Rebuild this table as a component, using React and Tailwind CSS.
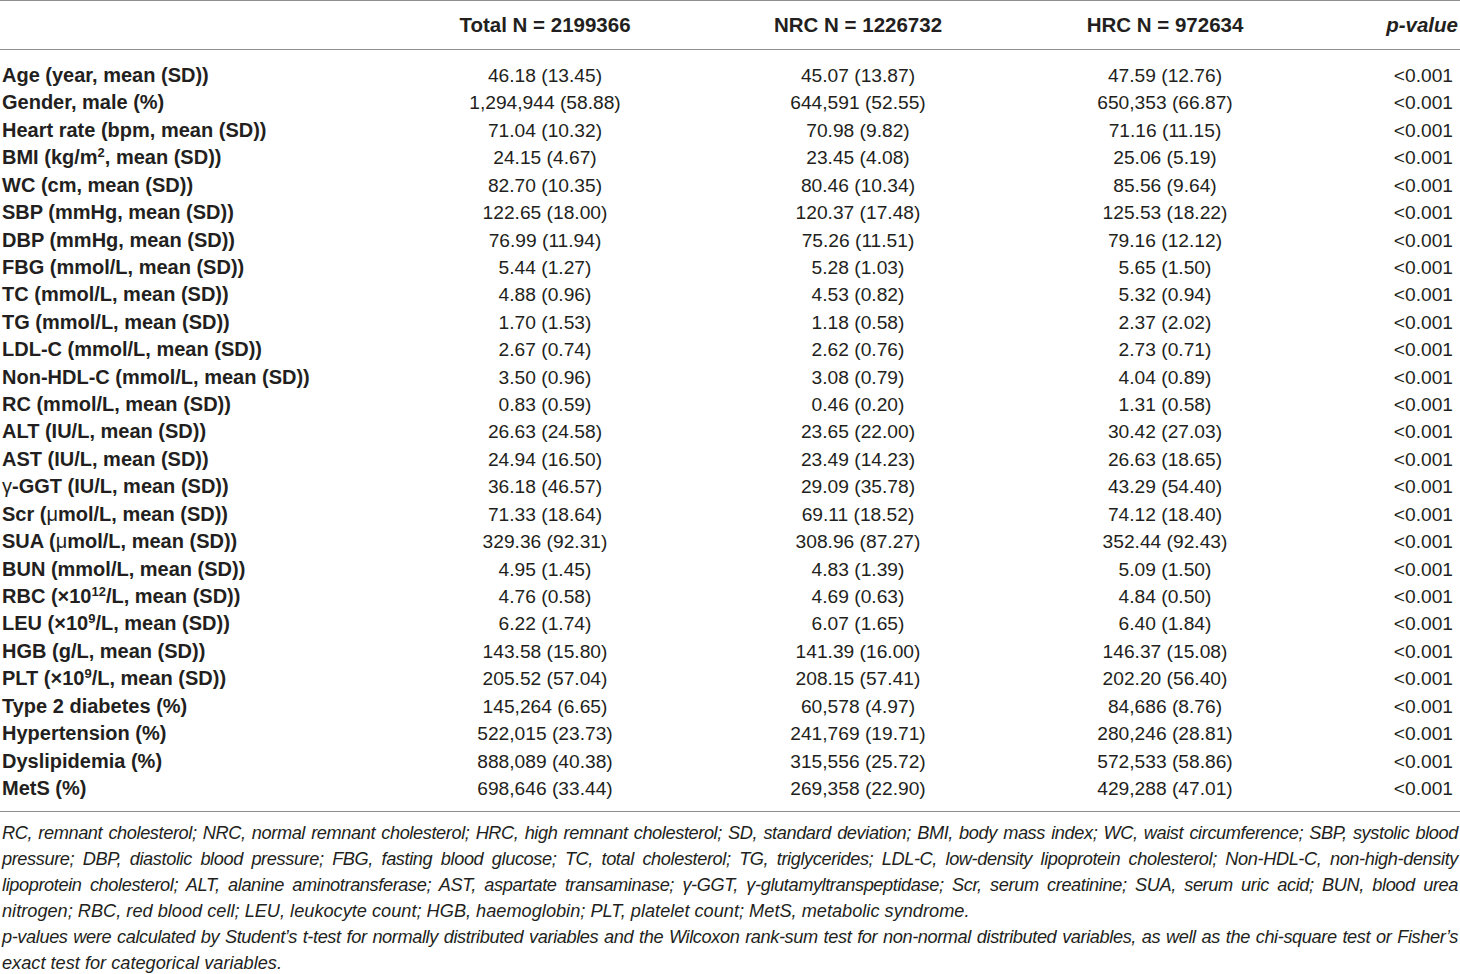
// App.jsx
const Sup = ({ children }) => <sup className="text-[13px] -top-[0.55em]">{children}</sup>

const rows = [
    [<>Age (year, mean (SD))</>, '46.18 (13.45)', '45.07 (13.87)', '47.59 (12.76)'],
    [<>Gender, male (%)</>, '1,294,944 (58.88)', '644,591 (52.55)', '650,353 (66.87)'],
    [<>Heart rate (bpm, mean (SD))</>, '71.04 (10.32)', '70.98 (9.82)', '71.16 (11.15)'],
    [<>BMI (kg/m<Sup>2</Sup>, mean (SD))</>, '24.15 (4.67)', '23.45 (4.08)', '25.06 (5.19)'],
    [<>WC (cm, mean (SD))</>, '82.70 (10.35)', '80.46 (10.34)', '85.56 (9.64)'],
    [<>SBP (mmHg, mean (SD))</>, '122.65 (18.00)', '120.37 (17.48)', '125.53 (18.22)'],
    [<>DBP (mmHg, mean (SD))</>, '76.99 (11.94)', '75.26 (11.51)', '79.16 (12.12)'],
    [<>FBG (mmol/L, mean (SD))</>, '5.44 (1.27)', '5.28 (1.03)', '5.65 (1.50)'],
    [<>TC (mmol/L, mean (SD))</>, '4.88 (0.96)', '4.53 (0.82)', '5.32 (0.94)'],
    [<>TG (mmol/L, mean (SD))</>, '1.70 (1.53)', '1.18 (0.58)', '2.37 (2.02)'],
    [<>LDL-C (mmol/L, mean (SD))</>, '2.67 (0.74)', '2.62 (0.76)', '2.73 (0.71)'],
    [<>Non-HDL-C (mmol/L, mean (SD))</>, '3.50 (0.96)', '3.08 (0.79)', '4.04 (0.89)'],
    [<>RC (mmol/L, mean (SD))</>, '0.83 (0.59)', '0.46 (0.20)', '1.31 (0.58)'],
    [<>ALT (IU/L, mean (SD))</>, '26.63 (24.58)', '23.65 (22.00)', '30.42 (27.03)'],
    [<>AST (IU/L, mean (SD))</>, '24.94 (16.50)', '23.49 (14.23)', '26.63 (18.65)'],
    [<><span className="font-normal">γ</span>-GGT (IU/L, mean (SD))</>, '36.18 (46.57)', '29.09 (35.78)', '43.29 (54.40)'],
    [<>Scr (<span className="font-normal">μ</span>mol/L, mean (SD))</>, '71.33 (18.64)', '69.11 (18.52)', '74.12 (18.40)'],
    [<>SUA (<span className="font-normal">μ</span>mol/L, mean (SD))</>, '329.36 (92.31)', '308.96 (87.27)', '352.44 (92.43)'],
    [<>BUN (mmol/L, mean (SD))</>, '4.95 (1.45)', '4.83 (1.39)', '5.09 (1.50)'],
    [<>RBC (×10<Sup>12</Sup>/L, mean (SD))</>, '4.76 (0.58)', '4.69 (0.63)', '4.84 (0.50)'],
    [<>LEU (×10<Sup>9</Sup>/L, mean (SD))</>, '6.22 (1.74)', '6.07 (1.65)', '6.40 (1.84)'],
    [<>HGB (g/L, mean (SD))</>, '143.58 (15.80)', '141.39 (16.00)', '146.37 (15.08)'],
    [<>PLT (×10<Sup>9</Sup>/L, mean (SD))</>, '205.52 (57.04)', '208.15 (57.41)', '202.20 (56.40)'],
    [<>Type 2 diabetes (%)</>, '145,264 (6.65)', '60,578 (4.97)', '84,686 (8.76)'],
    [<>Hypertension (%)</>, '522,015 (23.73)', '241,769 (19.71)', '280,246 (28.81)'],
    [<>Dyslipidemia (%)</>, '888,089 (40.38)', '315,556 (25.72)', '572,533 (58.86)'],
    [<>MetS (%)</>, '698,646 (33.44)', '269,358 (22.90)', '429,288 (47.01)'],
]

const notes = [
    'RC, remnant cholesterol; NRC, normal remnant cholesterol; HRC, high remnant cholesterol; SD, standard deviation; BMI, body mass index; WC, waist circumference; SBP, systolic blood',
    'pressure; DBP, diastolic blood pressure; FBG, fasting blood glucose; TC, total cholesterol; TG, triglycerides; LDL-C, low-density lipoprotein cholesterol; Non-HDL-C, non-high-density',
    'lipoprotein cholesterol; ALT, alanine aminotransferase; AST, aspartate transaminase; γ-GGT, γ-glutamyltranspeptidase; Scr, serum creatinine; SUA, serum uric acid; BUN, blood urea',
]

const cols = 'grid grid-cols-[390px_310px_316px_298px_1fr]'
const fullLine = 'text-justify [text-align-last:justify] tracking-[-0.4px] whitespace-nowrap'

const App = () => {
    return (
        <div className="min-h-screen bg-white text-[#231f20] font-['Liberation_Sans',Arial,sans-serif]">
            <div className="border-t border-[#8f8f8f]" />
            <div className={`${cols} h-[49px] items-center text-[20.5px] font-bold border-b border-[#8f8f8f]`}>
                <div />
                <div className="text-center">Total N = 2199366</div>
                <div className="text-center">NRC N = 1226732</div>
                <div className="text-center">HRC N = 972634</div>
                <div className="text-right pr-[2px] italic">p-value</div>
            </div>
            <div className="pt-[12px] pb-[9px] border-b border-[#8f8f8f]">
                {rows.map((r, i) => (
                    <div key={i} className={`${cols} text-[19.2px] leading-[27.42px]`}>
                        <div className="pl-[2px] font-bold text-[20px] whitespace-nowrap">{r[0]}</div>
                        <div className="text-center">{r[1]}</div>
                        <div className="text-center">{r[2]}</div>
                        <div className="text-center">{r[3]}</div>
                        <div className="text-right pr-[7px]">&lt;0.001</div>
                    </div>
                ))}
            </div>
            <div className="pt-[8px] px-[2px] italic text-[18.2px] leading-[26px]">
                {notes.map((n, i) => (
                    <div key={i} className={fullLine}>{n}</div>
                ))}
                <div>nitrogen; RBC, red blood cell; LEU, leukocyte count; HGB, haemoglobin; PLT, platelet count; MetS, metabolic syndrome.</div>
                <div className={fullLine}>
                    p-values were calculated by Student’s t-test for normally distributed variables and the Wilcoxon rank-sum test for non-normal distributed variables, as well as the chi-square test or Fisher’s
                </div>
                <div>exact test for categorical variables.</div>
            </div>
        </div>
    )
}

export default App
